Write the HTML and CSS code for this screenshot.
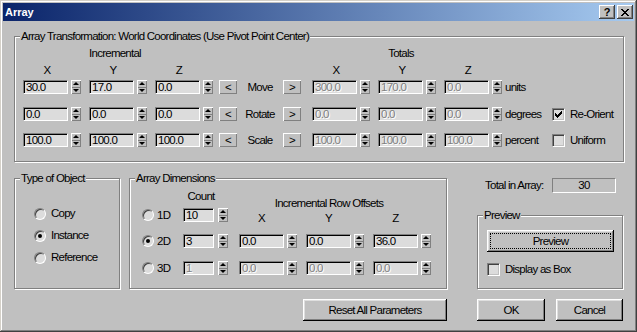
FILE: index.html
```html
<!DOCTYPE html>
<html lang="en">

<head>
  <meta charset="UTF-8">
  <title>Array</title>
  <link rel="stylesheet" href="styles.css">
</head>

<body>
  <div class="window">
    <div class="titlebar">
      <span class="title">Array</span>
      <span class="cap-btn">?</span>
      <span class="cap-btn">
        <svg width="8" height="7" viewBox="0 0 8 7" shape-rendering="crispEdges"><path d="M0 0h2v1H0z M6 0h2v1H6z M1 1h2v1H1z M5 1h2v1H5z M2 2h4v1H2z M3 3h2v1H3z M2 4h4v1H2z M1 5h2v1H1z M5 5h2v1H5z M0 6h2v1H0z M6 6h2v1H6z"/></svg>
      </span>
    </div>

    <div class="client">
      <fieldset class="group transform">
        <legend>Array Transformation: World Coordinates (Use Pivot Point Center)</legend>
        <div class="xf">
          <div class="xf-head">
            <span class="inc">Incremental</span>
            <span class="tot">Totals</span>
          </div>
          <div class="xf-axes">
            <span class="axis">X</span>
            <span class="axis">Y</span>
            <span class="axis wide">Z</span>
            <span class="axis">X</span>
            <span class="axis">Y</span>
            <span class="axis">Z</span>
          </div>

          <div class="xf-row first">
            <span class="sf"><input class="edit" value="30.0"><span class="spin"></span></span>
            <span class="sf"><input class="edit" value="17.0"><span class="spin"></span></span>
            <span class="sf end"><input class="edit" value="0.0"><span class="spin"></span></span>
            <span class="arrow-btn">&lt;</span>
            <span class="xf-label">Move</span>
            <span class="arrow-btn next">&gt;</span>
            <span class="sf"><input class="edit" value="300.0" disabled><span class="spin"></span></span>
            <span class="sf"><input class="edit" value="170.0" disabled><span class="spin"></span></span>
            <span class="sf tail"><input class="edit" value="0.0" disabled><span class="spin"></span></span>
            <span class="unit">units</span>
          </div>

          <div class="xf-row">
            <span class="sf"><input class="edit" value="0.0"><span class="spin"></span></span>
            <span class="sf"><input class="edit" value="0.0"><span class="spin"></span></span>
            <span class="sf end"><input class="edit" value="0.0"><span class="spin"></span></span>
            <span class="arrow-btn">&lt;</span>
            <span class="xf-label">Rotate</span>
            <span class="arrow-btn next">&gt;</span>
            <span class="sf"><input class="edit" value="0.0" disabled><span class="spin"></span></span>
            <span class="sf"><input class="edit" value="0.0" disabled><span class="spin"></span></span>
            <span class="sf tail"><input class="edit" value="0.0" disabled><span class="spin"></span></span>
            <span class="unit">degrees</span>
            <label class="check-label">
              <span class="checkbox"><svg width="7" height="7" viewBox="0 0 7 7" shape-rendering="crispEdges"><path d="M6 0h1v1h-1z M5 1h2v1h-2z M0 2h1v1H0z M4 2h3v1H4z M0 3h2v1H0z M3 3h3v1H3z M0 4h5v1H0z M1 5h3v1H1z M2 6h1v1H2z"/></svg></span>
              Re-Orient
            </label>
          </div>

          <div class="xf-row last">
            <span class="sf"><input class="edit" value="100.0"><span class="spin"></span></span>
            <span class="sf"><input class="edit" value="100.0"><span class="spin"></span></span>
            <span class="sf end"><input class="edit" value="100.0"><span class="spin"></span></span>
            <span class="arrow-btn">&lt;</span>
            <span class="xf-label">Scale</span>
            <span class="arrow-btn next">&gt;</span>
            <span class="sf"><input class="edit" value="100.0" disabled><span class="spin"></span></span>
            <span class="sf"><input class="edit" value="100.0" disabled><span class="spin"></span></span>
            <span class="sf tail"><input class="edit" value="100.0" disabled><span class="spin"></span></span>
            <span class="unit">percent</span>
            <label class="check-label">
              <span class="checkbox"></span>
              Uniform
            </label>
          </div>
        </div>
      </fieldset>

      <div class="lower">
        <fieldset class="group type">
          <legend>Type of Object</legend>
          <div class="radios">
            <label class="radio-label"><span class="radio"></span>Copy</label>
            <label class="radio-label"><span class="radio on"></span>Instance</label>
            <label class="radio-label"><span class="radio"></span>Reference</label>
          </div>
        </fieldset>

        <fieldset class="group dims">
          <legend>Array Dimensions</legend>
          <div class="dims-body">
            <div class="dims-head">
              <span class="count-head">Count</span>
              <span class="iro-head">Incremental Row Offsets</span>
            </div>

            <div class="dims-row">
              <label class="dim-radio"><span class="radio"></span>1D</label>
              <span class="sf count"><input class="edit" value="10"><span class="spin"></span></span>
              <span class="axis-d">X</span>
              <span class="axis-d">Y</span>
              <span class="axis-d">Z</span>
            </div>

            <div class="dims-row second">
              <label class="dim-radio"><span class="radio on"></span>2D</label>
              <span class="sf count"><input class="edit" value="3"><span class="spin"></span></span>
              <span class="sf"><input class="edit" value="0.0"><span class="spin"></span></span>
              <span class="sf"><input class="edit" value="0.0"><span class="spin"></span></span>
              <span class="sf"><input class="edit" value="36.0"><span class="spin"></span></span>
            </div>

            <div class="dims-row third">
              <label class="dim-radio"><span class="radio"></span>3D</label>
              <span class="sf count"><input class="edit" value="1" disabled><span class="spin"></span></span>
              <span class="sf"><input class="edit" value="0.0" disabled><span class="spin"></span></span>
              <span class="sf"><input class="edit" value="0.0" disabled><span class="spin"></span></span>
              <span class="sf"><input class="edit" value="0.0" disabled><span class="spin"></span></span>
            </div>
          </div>
        </fieldset>

        <div class="side">
          <div class="total">
            <span>Total in Array:</span>
            <span class="static">30</span>
          </div>
          <fieldset class="group preview">
            <legend>Preview</legend>
            <div class="preview-body">
              <button class="btn preview-btn">Preview</button>
              <label class="check-label box">
                <span class="checkbox"></span>
                Display as Box
              </label>
            </div>
          </fieldset>
        </div>
      </div>

      <div class="buttons">
        <button class="btn reset">Reset All Parameters</button>
        <button class="btn ok">OK</button>
        <button class="btn cancel">Cancel</button>
      </div>
    </div>
  </div>
</body>

</html>
```

FILE: styles.css
```css
* {
  box-sizing: border-box;
}

body {
  margin: 0;
  font-family: "Liberation Sans", Arial, sans-serif;
  font-size: 11.5px;
  letter-spacing: -0.75px;
  line-height: 13px;
  color: #000;
  background: #c0c0c0;
}

.window {
  width: 637px;
  height: 332px;
  padding: 3px;
  background: #c0c0c0;
  box-shadow: inset -1px -1px #404040, inset 1px 1px #d4d0c8,
    inset -2px -2px #808080, inset 2px 2px #fff;
}

/* title bar */

.titlebar {
  display: flex;
  align-items: center;
  height: 18px;
  padding: 0 1px 0 2px;
  background: linear-gradient(to right, #0a246a, #a6caf0);
}

.title {
  flex: 1;
  color: #fff;
  font-weight: bold;
  font-size: 11px;
  letter-spacing: 0;
}

.cap-btn {
  width: 16px;
  height: 14px;
  margin-left: 2px;
  display: flex;
  align-items: center;
  justify-content: center;
  background: #c0c0c0;
  box-shadow: inset -1px -1px #404040, inset 1px 1px #fff, inset -2px -2px #808080;
  font-weight: bold;
  font-size: 11px;
  letter-spacing: 0;
}

.client {
  padding: 9px 10px 0 11px;
}

/* etched group boxes */

.group {
  margin: 0;
  padding: 0;
  min-width: 0;
  border: 1px solid #808080;
  box-shadow: 1px 1px #fff, inset 1px 1px #fff;
}

.group legend {
  margin-left: 5px;
  padding: 0 1px;
  background: #c0c0c0;
  line-height: 13px;
}

/* common controls */

.sf {
  display: flex;
  flex: none;
  width: 58px;
  gap: 3px;
  margin-right: 8px;
}

.edit {
  flex: none;
  width: 45px;
  height: 14px;
  margin: 0;
  padding: 0 0 0 2px;
  border: 1px solid;
  border-color: #808080 #fff #fff #808080;
  box-shadow: inset 1px 1px #000;
  background: #dcdcdc;
  font: inherit;
  letter-spacing: inherit;
  line-height: 12px;
  color: #000;
  outline: none;
}

.edit:disabled {
  color: #808080;
  text-shadow: 1px 1px #fff;
  background: #dcdcdc;
}

.spin {
  flex: none;
  width: 10px;
  height: 14px;
  display: flex;
  flex-direction: column;
  align-items: center;
  gap: 4px;
  padding-top: 2px;
  background: linear-gradient(#c0c0c0 7px, #808080 7px, #808080 8px, #c0c0c0 8px);
  box-shadow: inset 1px 1px #fff, inset -1px -1px #808080;
}

.spin::before,
.spin::after {
  content: "";
  width: 0;
  height: 0;
  border-left: 3px solid transparent;
  border-right: 3px solid transparent;
}

.spin::before {
  border-bottom: 3px solid #000;
}

.spin::after {
  border-top: 3px solid #000;
}

.arrow-btn {
  flex: none;
  width: 18px;
  height: 14px;
  display: flex;
  align-items: center;
  justify-content: center;
  box-shadow: inset 1px 1px #fff, inset -1px -1px #808080;
}

.check-label {
  display: flex;
  align-items: center;
  gap: 5px;
  white-space: nowrap;
}

.checkbox {
  flex: none;
  width: 13px;
  height: 13px;
  display: flex;
  align-items: center;
  justify-content: center;
  border: 1px solid;
  border-color: #808080 #fff #fff #808080;
  box-shadow: inset 1px 1px #404040, inset -1px -1px #c0c0c0;
  background: #dcdcdc;
}

.radio {
  flex: none;
  width: 12px;
  height: 12px;
  display: flex;
  align-items: center;
  justify-content: center;
  border-radius: 50%;
  border: 1px solid;
  border-color: #808080 #fff #fff #808080;
  box-shadow: inset 1px 1px #404040;
  background: #dcdcdc;
}

.radio.on::after {
  content: "";
  width: 4px;
  height: 4px;
  border-radius: 50%;
  background: #000;
}

.btn {
  height: 22px;
  margin: 0;
  padding: 0;
  border: 0;
  background: #c0c0c0;
  font: inherit;
  letter-spacing: inherit;
  color: #000;
  box-shadow: inset -1px -1px #000, inset 1px 1px #fff,
    inset -2px -2px #808080, inset 2px 2px #dfdfdf;
}

/* array transformation */

.transform {
  width: 610px;
}

.xf {
  padding: 4px 0 14px 8px;
}

.xf-head {
  display: flex;
  height: 13px;
}

.xf-head .inc {
  width: 184px;
  text-align: center;
}

.xf-head .tot {
  width: 178px;
  margin-left: 105px;
  text-align: center;
}

.xf-axes {
  display: flex;
  height: 13px;
  margin-top: 4px;
}

.axis {
  width: 48px;
  margin-right: 18px;
  text-align: center;
}

.axis.wide {
  margin-right: 109px;
}

.xf-row {
  display: flex;
  align-items: center;
  height: 14px;
  margin-top: 13px;
}

.xf-row.first {
  margin-top: 3px;
}

.xf-row.last {
  margin-top: 12px;
}

.sf.end {
  margin-right: 6px;
}

.sf.tail {
  margin-right: 3px;
}

.arrow-btn.next {
  margin-right: 11px;
}

.xf-label {
  width: 46px;
  text-align: center;
}

.unit {
  width: 47px;
}

/* lower part */

.lower {
  display: flex;
  margin-top: 10px;
}

.type {
  width: 106px;
  height: 117px;
  margin-right: 9px;
}

.radios {
  display: flex;
  flex-direction: column;
  gap: 9px;
  padding: 22px 0 0 19px;
}

.radio-label {
  display: flex;
  align-items: center;
  gap: 5px;
  height: 13px;
}

.dims {
  width: 318px;
  height: 117px;
  margin-right: 30px;
}

.dims-body {
  padding: 5px 0 0 12px;
}

.dims-head {
  display: flex;
  align-items: flex-start;
  height: 18px;
}

.count-head {
  width: 36px;
  margin-left: 41px;
  text-align: center;
}

.iro-head {
  width: 180px;
  margin-left: 20px;
  margin-top: 7px;
  text-align: center;
  white-space: nowrap;
}

.dims-row {
  display: flex;
  align-items: center;
  height: 14px;
}

.dims-row.second {
  margin-top: 12px;
}

.dims-row.third {
  margin-top: 13px;
}

.dim-radio {
  display: flex;
  align-items: center;
  gap: 3px;
  width: 41px;
  flex: none;
}

.sf.count {
  width: 45px;
  gap: 4px;
  margin-right: 11px;
}

.sf.count .edit {
  width: 31px;
}

.dims-row .sf {
  margin-right: 9px;
}

.dims-row .sf.count {
  margin-right: 11px;
}

.axis-d {
  width: 45px;
  margin-right: 22px;
  margin-top: 4px;
  align-self: flex-start;
  text-align: center;
}

.side {
  width: 146px;
}

.total {
  display: flex;
  align-items: center;
  height: 15px;
  margin-top: 6px;
  padding-left: 8px;
  white-space: nowrap;
}

.static {
  width: 64px;
  height: 15px;
  margin-left: auto;
  margin-right: 7px;
  border: 1px solid;
  border-color: #808080 #fff #fff #808080;
  text-align: center;
}

.preview {
  height: 80px;
  margin-top: 16px;
}

.preview-body {
  padding: 8px 0 0 9px;
}

.preview-btn {
  display: block;
  width: 127px;
  outline: 1px dotted #000;
  outline-offset: -4px;
}

.check-label.box {
  margin-top: 11px;
}

.buttons {
  display: flex;
  margin-top: 10px;
  padding-left: 289px;
}

.reset {
  width: 144px;
}

.ok {
  width: 68px;
  margin-left: 30px;
}

.cancel {
  width: 67px;
  margin-left: 11px;
}
```
